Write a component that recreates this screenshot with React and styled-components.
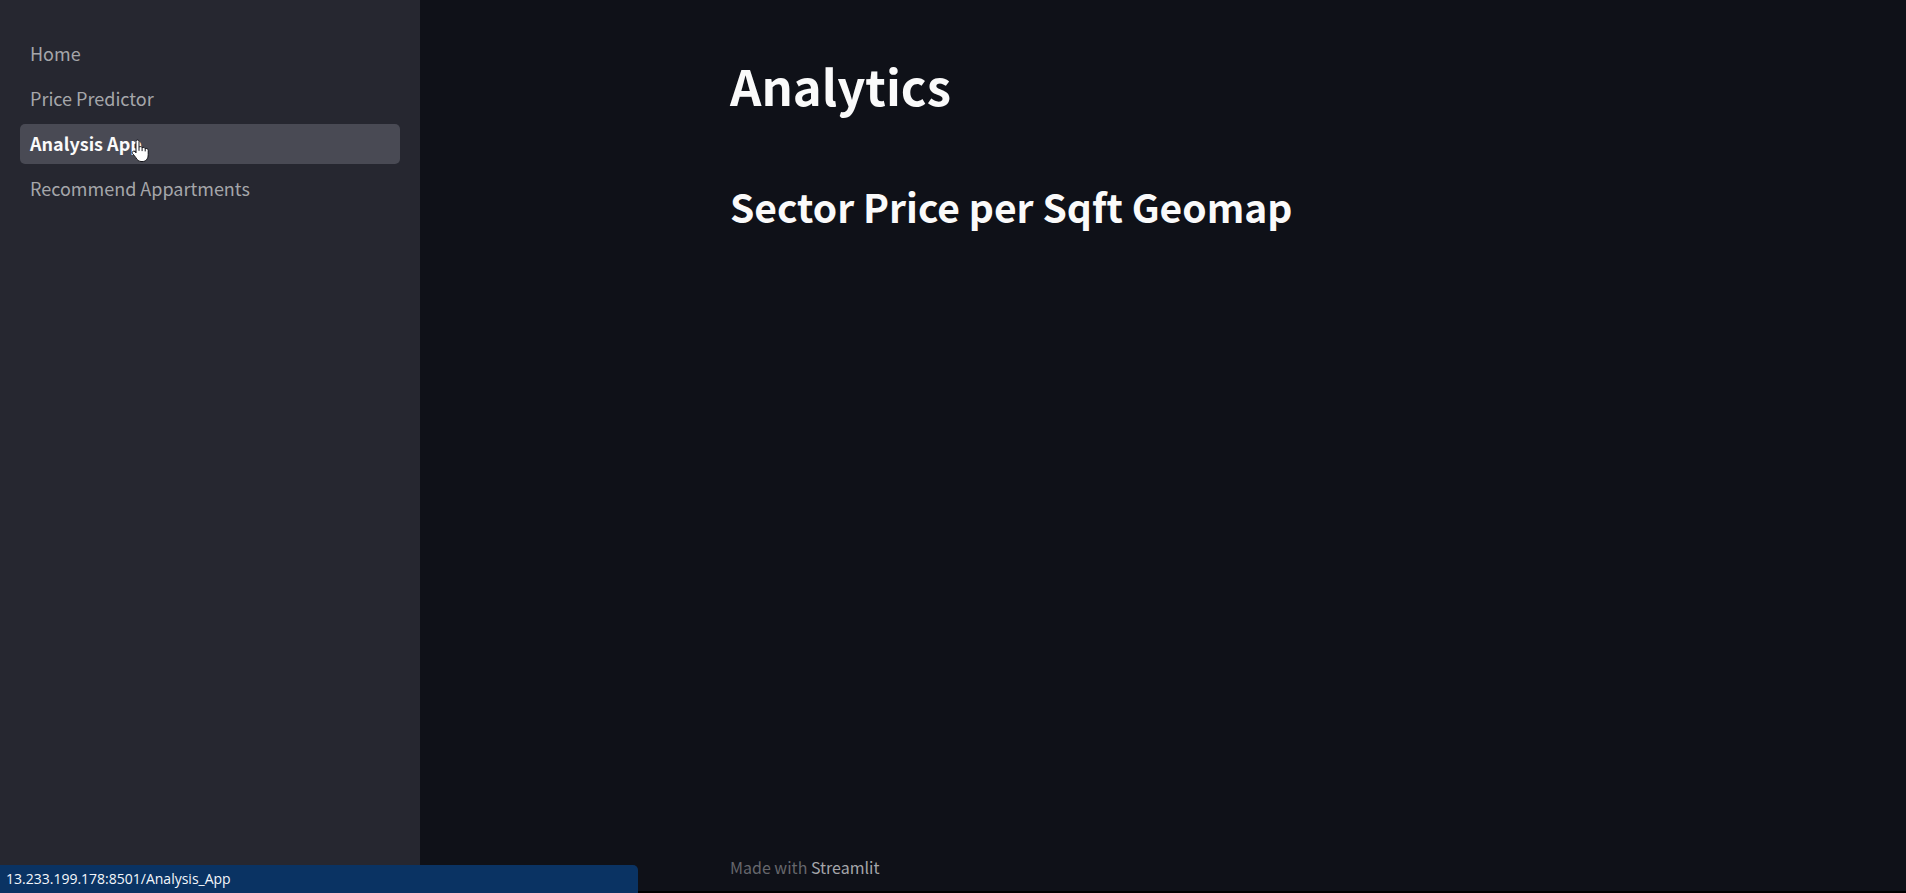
import React from "react";
import styled, { createGlobalStyle } from "styled-components";

const GlobalStyle = createGlobalStyle`
  *, *::before, *::after { box-sizing: border-box; }
  body {
    margin: 0;
    background: #0f1118;
    color: #fafafa;
    font-family: "Noto Sans CJK SC", "Open Sans", sans-serif;
    font-size: 18px;
  }
`;

const Shell = styled.div`
  display: flex;
  min-height: 100vh;
  border-bottom: 2px solid #000;
`;

const Sidebar = styled.aside`
  flex: 0 0 420px;
  padding: 34px 20px;
  background: #262730;
`;

const NavList = styled.ul`
  display: flex;
  flex-direction: column;
  gap: 5px;
  margin: 0;
  padding: 0;
  list-style: none;
`;

const NavLink = styled.a`
  display: block;
  position: relative;
  padding: 0 10px 2px;
  border-radius: 5px;
  line-height: 38px;
  text-decoration: none;
  color: ${(p) => (p.$active ? "#fafafa" : "#a5a6aa")};
  font-weight: ${(p) => (p.$active ? 700 : 400)};
  background: ${(p) => (p.$active ? "#494a54" : "transparent")};
`;

const Pointer = styled.svg`
  position: absolute;
  left: 111px;
  top: 15px;
`;

const Main = styled.main`
  flex: 1;
  display: flex;
  flex-direction: column;
  align-items: center;
`;

const Content = styled.section`
  flex: 1;
  width: 100%;
  max-width: 866px;
  padding-top: 52px;
`;

const Title = styled.h1`
  margin: 0;
  font-size: 49px;
  line-height: 66px;
  font-weight: 700;
`;

const Heading = styled.h2`
  margin: 61px 0 0;
  font-size: 39px;
  line-height: 54px;
  font-weight: 700;
`;

const Footer = styled.footer`
  width: 100%;
  max-width: 866px;
  padding-bottom: 11px;
  font-size: 16px;
  line-height: 26px;
  color: #66676c;
`;

const FooterLink = styled.a`
  color: #a5a6aa;
  text-decoration: none;
`;

const StatusBar = styled.div`
  position: fixed;
  left: 0;
  bottom: 0;
  width: 638px;
  padding: 0 6px;
  border-top-right-radius: 5px;
  background: #0a3363;
  color: #f4f7fb;
  font-family: "Open Sans", "Noto Sans", sans-serif;
  font-size: 14px;
  line-height: 28px;
`;

const pages = ["Home", "Price Predictor", "Analysis App", "Recommend Appartments"];
const current = "Analysis App";

function HandPointer() {
  return (
    <Pointer width="20" height="24" viewBox="0 0 20 24" aria-hidden="true">
      <path
        d="M5 2.4C5 .5 8 .5 8 2.4V8C9 7.3 10.7 7.5 11.1 8.6C12.2 8 13.8 8.5 14.2 9.6C15.6 9.1 17.2 9.8 17.2 11.4V15.5C17.2 20 14.8 22.6 11 22.6C7.8 22.6 6 21 4.7 18.4L1.6 14.6C.4 12.9 2.4 11.4 3.8 12.6L5 13.8Z"
        fill="#fff"
        stroke="#111218"
        strokeWidth="1"
        strokeLinejoin="round"
      />
      <path d="M8 8V11.8M11.1 8.6V12.1M14.2 9.6V12.4" stroke="#111218" strokeWidth="1" />
    </Pointer>
  );
}

export default function App() {
  return (
    <>
      <GlobalStyle />
      <Shell>
        <Sidebar>
          <nav aria-label="Pages">
            <NavList>
              {pages.map((page) => (
                <li key={page}>
                  <NavLink
                    href={`#${page.replace(" ", "_")}`}
                    $active={page === current}
                    aria-current={page === current ? "page" : undefined}
                  >
                    {page}
                    {page === current && <HandPointer />}
                  </NavLink>
                </li>
              ))}
            </NavList>
          </nav>
        </Sidebar>
        <Main>
          <Content>
            <Title>Analytics</Title>
            <Heading>Sector Price per Sqft Geomap</Heading>
          </Content>
          <Footer>
            Made with <FooterLink href="#streamlit">Streamlit</FooterLink>
          </Footer>
        </Main>
      </Shell>
      <StatusBar role="status">13.233.199.178:8501/Analysis_App</StatusBar>
    </>
  );
}
